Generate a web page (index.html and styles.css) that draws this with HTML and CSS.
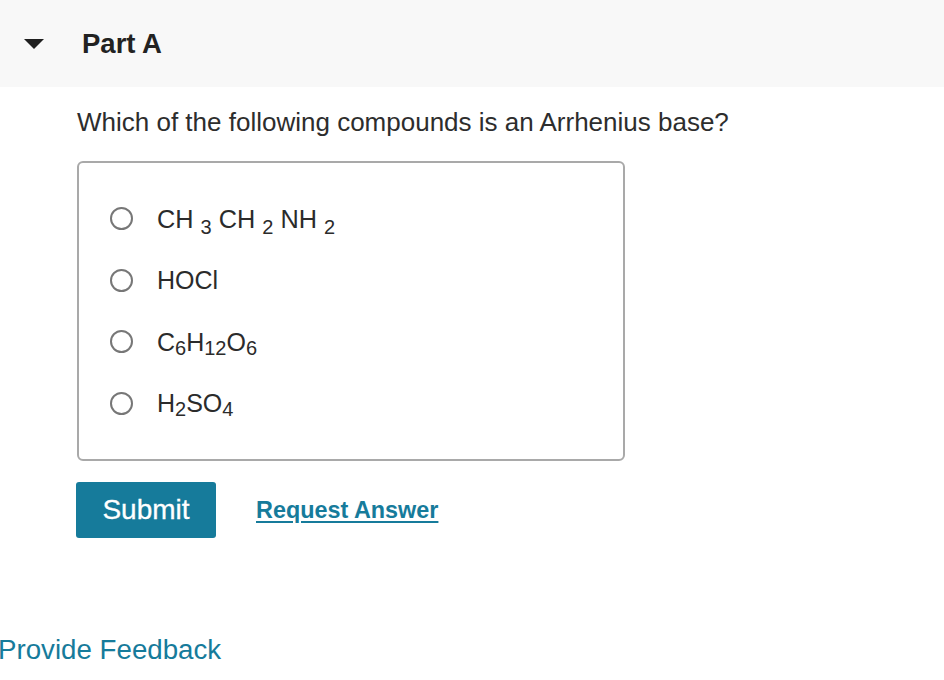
FILE: index.html
```html
<!DOCTYPE html>
<html lang="en">
<head>
<meta charset="utf-8">
<title>Part A</title>
<link rel="stylesheet" href="styles.css">
</head>
<body>
<header class="part-header">
  <svg class="caret" width="20" height="10" viewBox="0 0 20 10" aria-hidden="true"><polygon points="0,0 20,0 10,10" fill="#1f1f1f"/></svg>
  <h2 class="part-title">Part A</h2>
</header>
<main class="part-body">
  <p class="question">Which of the following compounds is an Arrhenius base?</p>
  <div class="choices">
    <label class="choice"><span class="radio"></span><span class="formula spaced">CH <sub>3</sub> CH <sub>2</sub> NH <sub>2</sub></span></label>
    <label class="choice"><span class="radio"></span><span class="formula">HOCl</span></label>
    <label class="choice"><span class="radio"></span><span class="formula">C<sub>6</sub>H<sub>12</sub>O<sub>6</sub></span></label>
    <label class="choice"><span class="radio"></span><span class="formula">H<sub>2</sub>SO<sub>4</sub></span></label>
  </div>
  <div class="actions">
    <button class="submit" type="button">Submit</button>
    <a class="request" href="#">Request Answer</a>
  </div>
</main>
<a class="feedback" href="#">Provide Feedback</a>
</body>
</html>
```

FILE: styles.css
```css
html, body {
  margin: 0;
  padding: 0;
  background: #ffffff;
}

body {
  font-family: "Liberation Sans", Arial, Helvetica, sans-serif;
  color: #2b2b2b;
}

.part-header {
  height: 87px;
  background: #f8f8f8;
  display: flex;
  align-items: center;
}

.caret {
  display: block;
  margin-left: 24px;
}

.part-title {
  margin: 0 0 0 38px;
  font-size: 27.5px;
  font-weight: 700;
  line-height: 30px;
  color: #222222;
}

.part-body {
  padding-left: 77px;
}

.question {
  margin: 20px 0 0 0;
  font-size: 26px;
  line-height: 30px;
  color: #2d2d2d;
}

.choices {
  margin-top: 24px;
  width: 548px;
  height: 300px;
  box-sizing: border-box;
  border: 2px solid #a9a9a9;
  border-radius: 6px;
  padding: 25px 0 25px 31px;
  display: flex;
  flex-direction: column;
}

.choice {
  height: 62px;
  display: flex;
  align-items: center;
  gap: 24px;
}

.radio {
  width: 23px;
  height: 23px;
  box-sizing: border-box;
  border: 2px solid #777777;
  border-radius: 50%;
  flex: none;
  background: #ffffff;
}

.formula {
  font-size: 25px;
  line-height: 30px;
  color: #2b2b2b;
}

.formula sub {
  font-size: 20px;
  line-height: 0;
  vertical-align: -4px;
}

.formula.spaced {
  font-size: 25.3px;
}

.formula.spaced sub {
  vertical-align: -6px;
}

.actions {
  margin-top: 21px;
  margin-left: -1px;
  display: flex;
  align-items: center;
  gap: 40px;
}

.submit {
  width: 140px;
  height: 56px;
  border: none;
  border-radius: 3px;
  background: #167b9b;
  color: #ffffff;
  font-family: "Liberation Sans", Arial, sans-serif;
  font-size: 28px;
  padding: 0;
  -webkit-text-stroke: 0.3px #ffffff;
}

.request {
  font-size: 23.4px;
  font-weight: 700;
  color: #167b9b;
  text-decoration: underline;
  text-underline-offset: 3px;
}

.feedback {
  display: block;
  margin: 97px 0 0 -2px;
  font-size: 27.7px;
  line-height: 30px;
  color: #167b9b;
  text-decoration: none;
  width: max-content;
}
```
